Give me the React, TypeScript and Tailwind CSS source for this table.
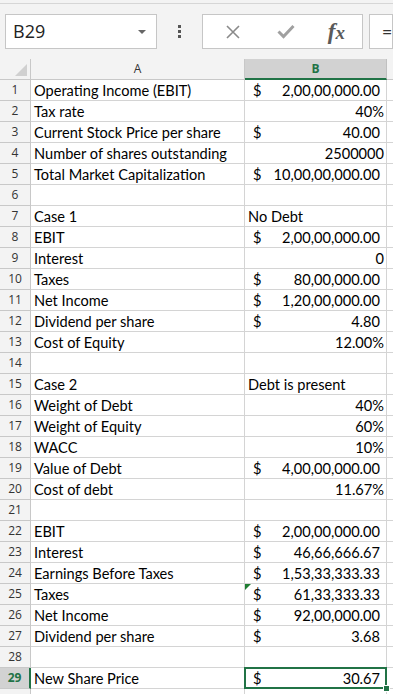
import React from 'react';

type Row = {
    label: string;
    value?: string;
    kind?: 'cur' | 'num' | 'text';
    flag?: boolean;
};

const rows: Row[] = [
    { label: 'Operating Income (EBIT)', value: '2,00,00,000.00', kind: 'cur' },
    { label: 'Tax rate', value: '40%', kind: 'num' },
    { label: 'Current Stock Price per share', value: '40.00', kind: 'cur' },
    { label: 'Number of shares outstanding', value: '2500000', kind: 'num' },
    { label: 'Total Market Capitalization', value: '10,00,00,000.00', kind: 'cur' },
    { label: '' },
    { label: 'Case 1', value: 'No Debt', kind: 'text' },
    { label: 'EBIT', value: '2,00,00,000.00', kind: 'cur' },
    { label: 'Interest', value: '0', kind: 'num' },
    { label: 'Taxes', value: '80,00,000.00', kind: 'cur' },
    { label: 'Net Income', value: '1,20,00,000.00', kind: 'cur' },
    { label: 'Dividend per share', value: '4.80', kind: 'cur' },
    { label: 'Cost of Equity', value: '12.00%', kind: 'num' },
    { label: '' },
    { label: 'Case 2', value: 'Debt is present', kind: 'text' },
    { label: 'Weight of Debt', value: '40%', kind: 'num' },
    { label: 'Weight of Equity', value: '60%', kind: 'num' },
    { label: 'WACC', value: '10%', kind: 'num' },
    { label: 'Value of Debt', value: '4,00,00,000.00', kind: 'cur' },
    { label: 'Cost of debt', value: '11.67%', kind: 'num' },
    { label: '' },
    { label: 'EBIT', value: '2,00,00,000.00', kind: 'cur' },
    { label: 'Interest', value: '46,66,666.67', kind: 'cur' },
    { label: 'Earnings Before Taxes', value: '1,53,33,333.33', kind: 'cur' },
    { label: 'Taxes', value: '61,33,333.33', kind: 'cur', flag: true },
    { label: 'Net Income', value: '92,00,000.00', kind: 'cur' },
    { label: 'Dividend per share', value: '3.68', kind: 'cur' },
    { label: '' },
    { label: 'New Share Price', value: '30.67', kind: 'cur' },
];

const cellFont = { fontFamily: 'Lato, "Open Sans", sans-serif' };

const Toolbar = () => (
    <div className="h-[59px] bg-[#f3f3f3] pt-[3px]">
        <div className="h-full border-t border-[#d6d6d6] flex items-start pt-[10px] pl-[5px]">
            {/* Name box */}
            <div className="w-[154px] h-[35px] bg-white border border-[#c6c6c6] flex items-center justify-between pl-[7px] pr-[10px]">
                <span className="text-[18px] text-[#222]" style={{ fontFamily: '"Open Sans", sans-serif' }}>B29</span>
                <svg width="8" height="4" viewBox="0 0 8 4">
                    <path d="M0 0 L8 0 L4 4 Z" fill="#666" />
                </svg>
            </div>

            {/* More dots */}
            <div className="w-[45px] h-[35px] flex flex-col items-center justify-center gap-[2px]">
                <span className="w-[3px] h-[3px] bg-[#555]" />
                <span className="w-[3px] h-[3px] bg-[#555]" />
                <span className="w-[3px] h-[3px] bg-[#555]" />
            </div>

            {/* Cancel / Enter / fx */}
            <div className="w-[164px] h-[35px] bg-white border border-[#c6c6c6] flex items-center">
                <div className="w-[58px] flex justify-center pl-[2px]">
                    <svg width="16" height="16" viewBox="0 0 16 16">
                        <path d="M2 2 L14 14 M14 2 L2 14" stroke="#8a8a8a" strokeWidth="1.6" />
                    </svg>
                </div>
                <div className="w-[50px] flex justify-center">
                    <svg width="18" height="15" viewBox="0 0 18 15">
                        <path d="M1.5 7.5 L6.5 12.5 L16.5 2" stroke="#a0a0a0" strokeWidth="3" fill="none" />
                    </svg>
                </div>
                <div className="flex-1 flex justify-center">
                    <span className="text-[23px] leading-none italic font-bold text-[#5a5a5a]" style={{ fontFamily: '"Liberation Serif", serif' }}>
                        f<span className="text-[19px]">x</span>
                    </span>
                </div>
            </div>

            {/* Formula input */}
            <div className="ml-[6px] flex-1 h-[35px] bg-white border border-[#c6c6c6] flex items-center pl-[12px]">
                <span className="text-[17px] text-[#333]" style={{ fontFamily: '"Open Sans", sans-serif' }}>=</span>
            </div>
        </div>
    </div>
);

const HeaderRow = () => (
    <div className="flex h-[21px]" style={{ fontFamily: '"Open Sans", sans-serif' }}>
        <div className="w-[31px] bg-[#f3f3f3] border-r border-b border-[#c8c8c8] relative">
            <svg className="absolute right-[3px] bottom-[3px]" width="12" height="12" viewBox="0 0 12 12">
                <path d="M12 0 L12 12 L0 12 Z" fill="#d0d0d0" />
            </svg>
        </div>
        <div className="w-[214px] bg-[#f3f3f3] border-r border-b border-[#c8c8c8] flex items-center justify-center text-[12px] text-[#333]">
            A
        </div>
        <div className="w-[142px] bg-[#d2d2d2] border-r border-b-2 border-r-[#c0c0c0] border-b-[#217346] flex items-center justify-center text-[12px] font-bold text-[#217346]">
            B
        </div>
        <div className="flex-1 bg-[#f3f3f3] border-b border-[#c8c8c8]" />
    </div>
);

const SheetRow = ({ row, n }: { row: Row; n: number }) => {
    const selected = n === 29;
    return (
        <div className="flex h-[21px]">
            <div
                className={`w-[31px] shrink-0 border-b flex items-center justify-center text-[12px] ${
                    selected
                        ? 'bg-[#d2d2d2] text-[#217346] font-bold border-r-2 border-r-[#217346] border-b-[#c8c8c8]'
                        : 'bg-[#f3f3f3] text-[#333] border-r border-[#c8c8c8]'
                }`}
                style={{ fontFamily: '"Open Sans", sans-serif' }}
            >
                {n}
            </div>
            <div
                className="w-[214px] shrink-0 border-r border-b border-[#d4d4d4] pl-[3px] text-[14.6px] leading-[21px] text-black whitespace-nowrap overflow-hidden"
                style={cellFont}
            >
                {row.label}
            </div>
            <div
                className="w-[142px] shrink-0 border-r border-b border-[#d4d4d4] relative text-[14.6px] leading-[21px] text-black flex"
                style={cellFont}
            >
                {row.kind === 'cur' && (
                    <>
                        <span className="pl-[8px]">$</span>
                        <span className="flex-1 text-right pr-[6px]">{row.value}</span>
                    </>
                )}
                {row.kind === 'num' && <span className="flex-1 text-right pr-[2px]">{row.value}</span>}
                {row.kind === 'text' && <span className="pl-[3px]">{row.value}</span>}
                {row.flag && (
                    <svg className="absolute left-0 top-0" width="6" height="6" viewBox="0 0 6 6">
                        <path d="M0 0 L6 0 L0 6 Z" fill="#1e7d32" />
                    </svg>
                )}
                {selected && (
                    <>
                        <div className="absolute -left-[1px] -top-[1px] -right-[1px] -bottom-[1px] border-2 border-[#217346] pointer-events-none" />
                        <div className="absolute -right-[4px] -bottom-[4px] w-[7px] h-[7px] bg-[#217346] border border-white" />
                    </>
                )}
            </div>
            <div className="flex-1 border-b border-[#d4d4d4]" />
        </div>
    );
};

export default function App() {
    return (
        <div className="w-[393px] h-[694px] overflow-hidden bg-white">
            <Toolbar />
            <HeaderRow />
            {rows.map((row, idx) => (
                <SheetRow key={idx} row={row} n={idx + 1} />
            ))}
            <div className="flex h-[21px]">
                <div className="w-[31px] bg-[#f3f3f3] border-r border-[#c8c8c8]" />
                <div className="w-[214px] border-r border-[#d4d4d4]" />
                <div className="w-[142px] border-r border-[#d4d4d4]" />
            </div>
        </div>
    );
}
